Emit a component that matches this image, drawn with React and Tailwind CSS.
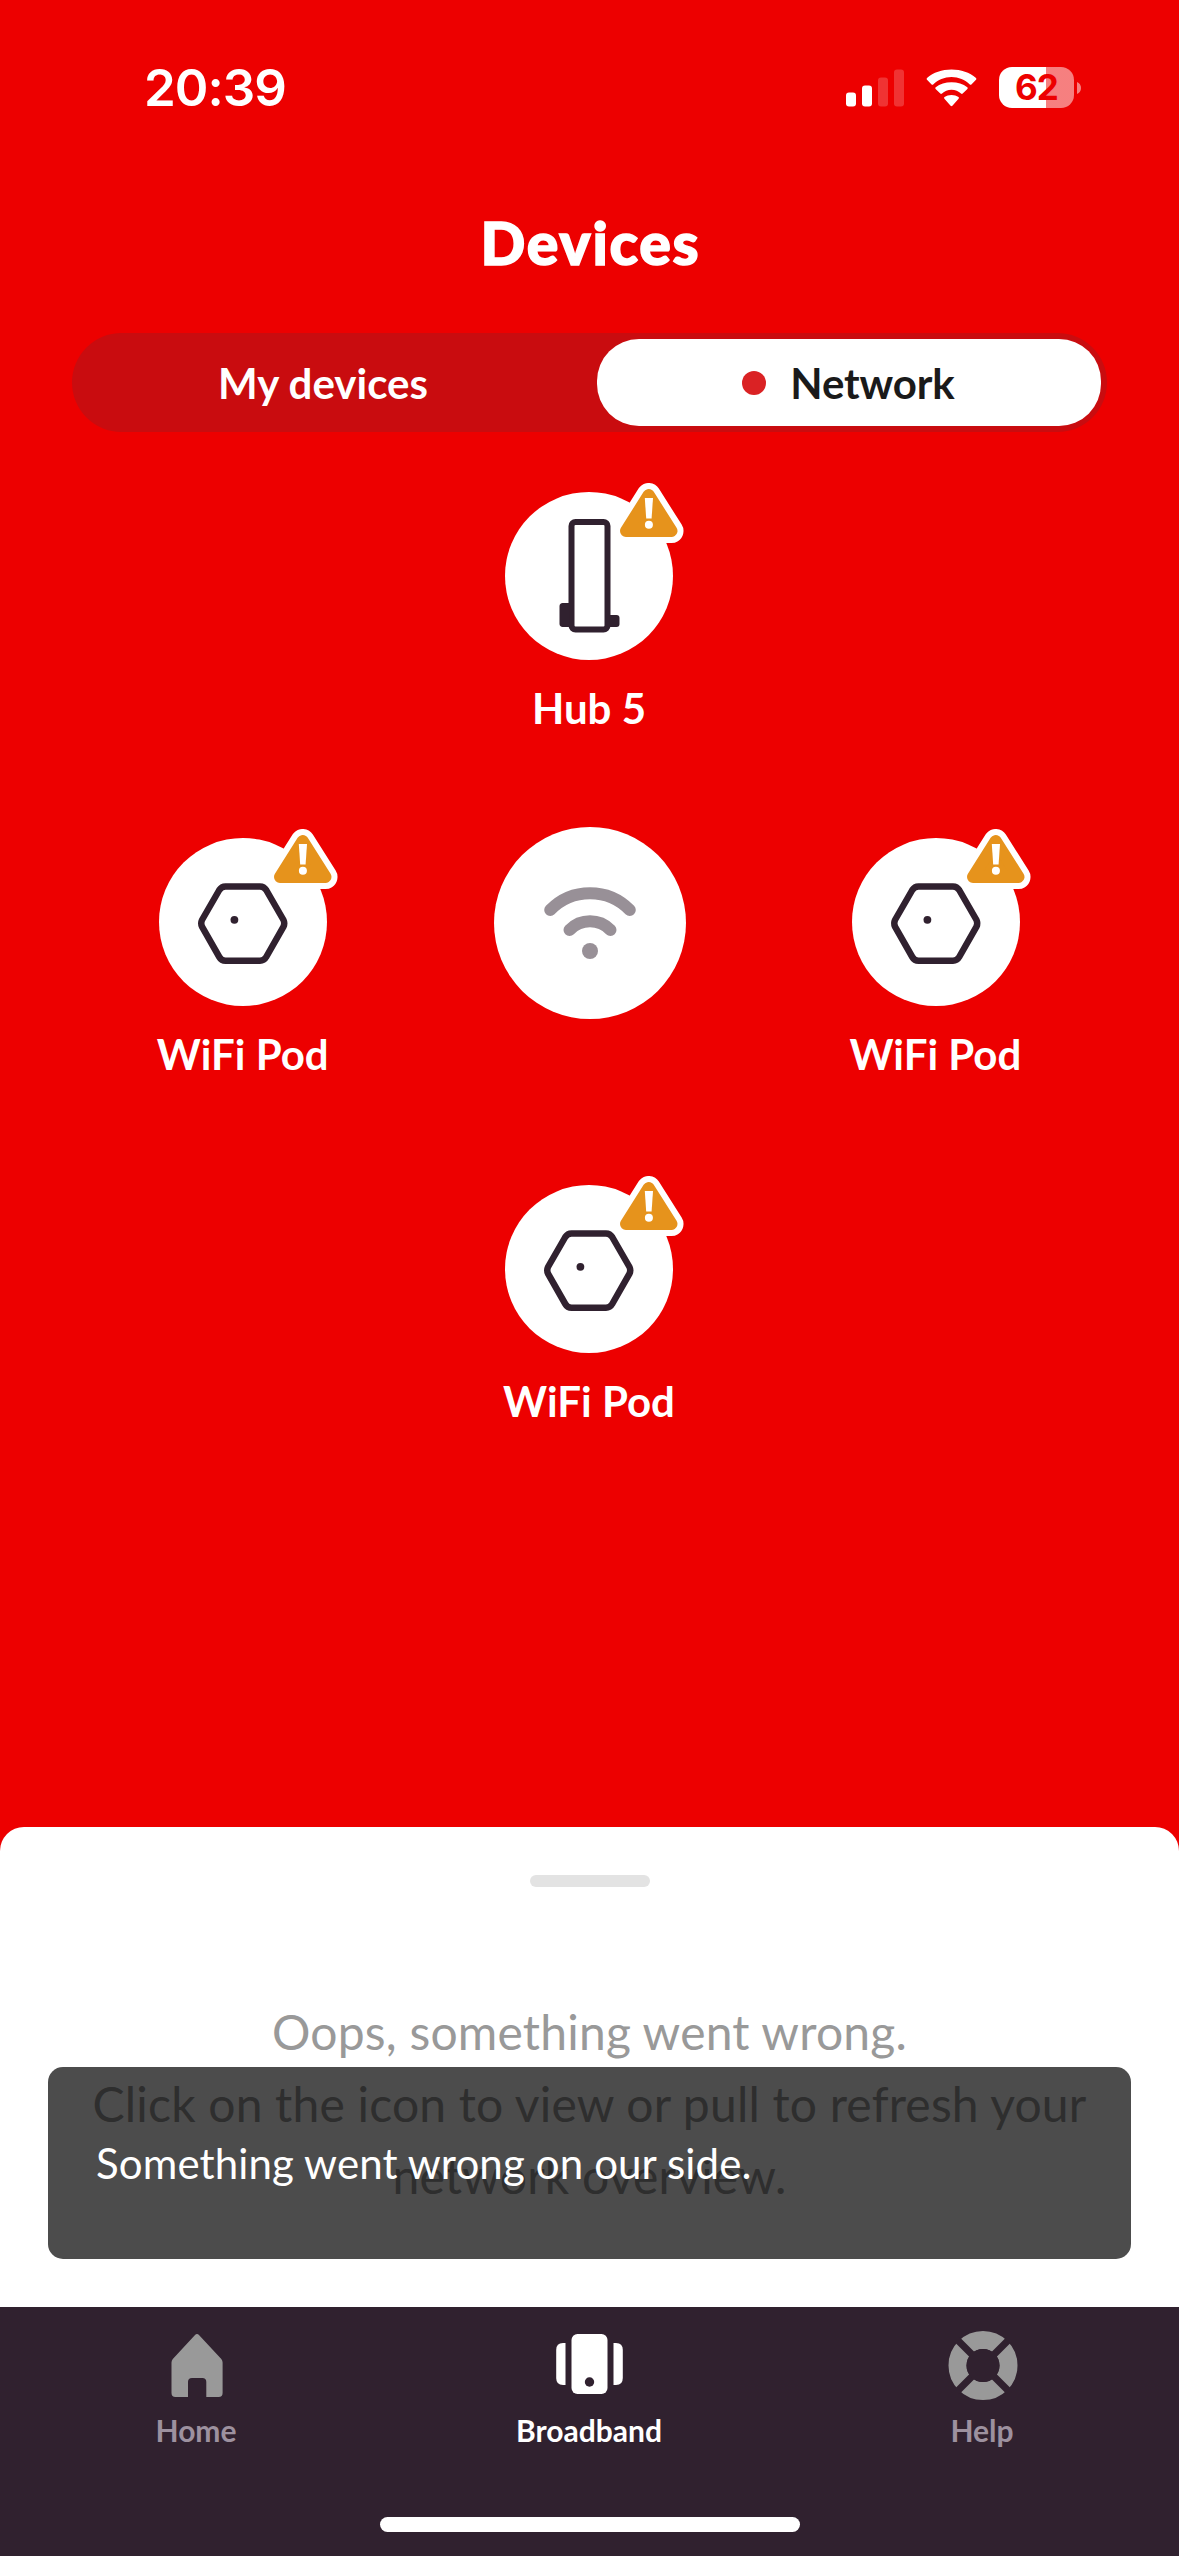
import React, { useState } from 'react';

const pods = {
  left: { name: 'WiFi Pod', type: 'pod' },
  right: { name: 'WiFi Pod', type: 'pod' },
  bottom: { name: 'WiFi Pod', type: 'pod' },
};

function StatusBar() {
  return (
    <div className="flex h-[176px] shrink-0 items-start justify-between pl-[144px] pr-[98px] pt-[57px] text-white">
      <span className="font-['Inter',sans-serif] text-[51px] font-semibold leading-[62px] tracking-[-1px]">20:39</span>

      <div className="flex items-center pt-[10px]">
        <svg className="mr-[22px] mt-[1px]" width="58" height="38" viewBox="0 0 58 38" fill="currentColor">
          <rect x="0" y="23.5" width="10" height="14" rx="3" />
          <rect x="16" y="16.5" width="10" height="21" rx="3" />
          <rect x="32" y="8.5" width="10" height="29" rx="3" opacity="0.2" />
          <rect x="48" y="0.5" width="10" height="37" rx="3" opacity="0.2" />
        </svg>
        <svg className="mr-[22px] mt-[1px]" width="51" height="38" viewBox="0 0 51 38" fill="currentColor">
          <path d="M25.5 8C32.6 8 39 10.8 43.8 15.4Q44.6 16.2 45.4 15.4L50 10.8Q50.9 9.9 50 9C43.6 3.4 35 0.5 25.5 0.5S7.4 3.4 1 9Q.1 9.9 1 10.8L5.6 15.4Q6.4 16.2 7.2 15.4C12 10.8 18.4 8 25.5 8Z" />
          <path d="M25.5 20.8C29.2 20.8 32.5 22.2 35 24.5Q35.9 25.3 36.7 24.5L41.4 19.9Q42.2 19 41.3 18.2C37.1 14.9 31.6 13.2 25.5 13.2S13.9 14.9 9.7 18.2Q8.8 19 9.6 19.9L14.3 24.5Q15.1 25.3 16 24.5C18.5 22.2 21.8 20.8 25.5 20.8Z" />
          <path d="M32.5 28Q33.4 28.8 32.6 29.7L26.4 36.7Q25.5 37.6 24.6 36.7L18.4 29.7Q17.6 28.8 18.5 28C20.4 26.6 22.8 25.9 25.5 25.9S30.6 26.6 32.5 28Z" />
        </svg>
        <div className="flex items-center gap-[3px]">
          <div className="flex h-[41px] w-[75px] items-center justify-center rounded-[13px] bg-linear-to-r from-white from-[62.5%] to-white/50 to-[62.5%]">
            <span className="font-['Inter',sans-serif] text-[35px] font-bold leading-none tracking-[-1px] text-[#ed0000]">62</span>
          </div>
          <svg width="4" height="12" viewBox="0 0 4 12" fill="currentColor" opacity="0.5">
            <path d="M0 0C2.5 1 4 3.3 4 6S2.5 11 0 12Z" />
          </svg>
        </div>
      </div>
    </div>
  );
}

function WarningBadge() {
  return (
    <svg className="absolute -top-[9px] left-[109px]" width="70" height="60" viewBox="0 0 70 60">
      <path d="M34.7 12L57.5 48H12Z" fill="#fff" stroke="#fff" strokeWidth="24" strokeLinejoin="round" />
      <path d="M34.7 12L57.5 48H12Z" fill="#e6931c" stroke="#e6931c" strokeWidth="12" strokeLinejoin="round" />
      <path d="M30.8 15H39L37.6 35.5H32.2Z" fill="#fff" />
      <circle cx="34.9" cy="41.7" r="4" fill="#fff" />
    </svg>
  );
}

function HubIcon() {
  return (
    <svg width="168" height="168" viewBox="0 0 168 168" fill="#30212f">
      <rect x="66.5" y="30" width="36" height="107.5" rx="4" fill="none" stroke="#30212f" strokeWidth="6" />
      <path d="M64.5 111V135H58A3 3 0 0 1 54.5 132V114A3 3 0 0 1 58 111Z" />
      <path d="M104.5 123H111.5A3 3 0 0 1 114.5 126V132A3 3 0 0 1 111.5 135H104.5Z" />
    </svg>
  );
}

function PodIcon() {
  return (
    <svg width="168" height="168" viewBox="0 0 168 168">
      <path
        d="M66.5 48.4H101Q105 48.4 107.2 52L124.5 82Q126 85.3 124.5 88.6L107.2 119Q105 122.8 101 122.8H66.5Q62.5 122.8 60.3 119L43 88.6Q41.5 85.3 43 82L60.3 52Q62.5 48.4 66.5 48.4Z"
        fill="none"
        stroke="#30212f"
        strokeWidth="6.5"
        strokeLinejoin="round"
      />
      <circle cx="75.4" cy="81.8" r="3.9" fill="#30212f" />
    </svg>
  );
}

function DeviceNode({ device }) {
  return (
    <button className="flex flex-col items-center gap-6">
      <div className="relative h-[168px] w-[168px] rounded-full bg-white">
        {device.type === 'hub' ? <HubIcon /> : <PodIcon />}
        <WarningBadge />
      </div>
      <span className="pr-px text-[42px] font-bold leading-[48px] text-white">{device.name}</span>
    </button>
  );
}

function WifiCenter() {
  return (
    <div className="-mt-[11px] ml-px flex h-[192px] w-[192px] items-center justify-center rounded-full bg-white">
      <svg width="192" height="192" viewBox="0 0 192 192" fill="none" stroke="#989097" strokeWidth="12" strokeLinecap="round">
        <path d="M56.2 83A55.6 55.6 0 0 1 135.8 83" />
        <path d="M75.5 103A28.6 28.6 0 0 1 116.5 103" />
        <circle cx="96" cy="124" r="8" fill="#989097" stroke="none" />
      </svg>
    </div>
  );
}

function HomeIcon() {
  return (
    <svg width="72" height="72" viewBox="0 0 72 72" fill="#999">
      <path d="M33.8 5.2Q36 2.8 38.2 5.2L60.3 29Q61.6 30.5 61.6 32.5V63Q61.6 67 57.6 67H45.3V52Q45.3 48 41.3 48H31Q27 48 27 52V67H14.5Q10.5 67 10.5 63V32.5Q10.5 30.5 11.8 29Z" />
    </svg>
  );
}

function BroadbandIcon() {
  return (
    <svg width="72" height="72" viewBox="0 0 72 72" fill="#fff">
      <rect x="17.5" y="4" width="36" height="60" rx="6" />
      <path d="M11.5 13V55H9Q2.2 55 2.2 48V20Q2.2 13 9 13Z" />
      <path d="M59.5 13V55H62Q68.8 55 68.8 48V20Q68.8 13 62 13Z" />
      <circle cx="35.5" cy="52" r="4.7" fill="#30212f" />
    </svg>
  );
}

function HelpIcon() {
  return (
    <svg width="72" height="72" viewBox="0 0 72 72">
      <circle cx="36" cy="35.5" r="25.5" fill="none" stroke="#999" strokeWidth="18" />
      <path d="M10 9.5L62 61.5M62 9.5L10 61.5" stroke="#30212f" strokeWidth="7" />
      <circle cx="36" cy="35.5" r="16.5" fill="#30212f" />
    </svg>
  );
}

const navItems = [
  { id: 'home', label: 'Home', icon: HomeIcon },
  { id: 'broadband', label: 'Broadband', icon: BroadbandIcon },
  { id: 'help', label: 'Help', icon: HelpIcon },
];

export default function App() {
  const [activeNav, setActiveNav] = useState('broadband');

  return (
    <div className="flex h-[2556px] w-[1179px] flex-col overflow-hidden bg-[#ed0000] font-['Lato',sans-serif]">
      <StatusBar />

      <header className="h-[157px] shrink-0 pt-[31px] text-center">
        <h1 className="pl-[2px] text-[59px] font-black leading-[72px] tracking-[1.7px] text-white [-webkit-text-stroke:1.5px_white]">
          Devices
        </h1>
      </header>

      {/* Tabs */}
      <div className="mx-[72px] flex h-[99px] shrink-0 items-center rounded-full bg-[#c90c0f] p-[6px] text-[42px] font-bold">
        <button className="h-full flex-1 pr-[29px] pt-[2px] text-white">My devices</button>
        <button className="flex h-[87px] w-[504px] items-center justify-center rounded-[42px] bg-white pr-px text-[#1a1a1a]">
          <span className="mr-6 h-6 w-6 rounded-full bg-[#da2224]" />
          <span className="pt-[2px] tracking-[-0.1px]">Network</span>
        </button>
      </div>

      {/* Network map */}
      <main className="mt-[60px] grid shrink-0 grid-cols-3 grid-rows-[346px_347px_346px] items-start justify-items-center px-[70px]">
        <div className="col-start-2">
          <DeviceNode device={{ name: 'Hub 5', type: 'hub' }} />
        </div>
        <div className="col-start-1 row-start-2">
          <DeviceNode device={pods.left} />
        </div>
        <div className="col-start-2 row-start-2">
          <WifiCenter />
        </div>
        <div className="col-start-3 row-start-2">
          <DeviceNode device={pods.right} />
        </div>
        <div className="col-start-2 row-start-3">
          <DeviceNode device={pods.bottom} />
        </div>
      </main>

      {/* Bottom sheet */}
      <section className="relative mt-auto flex h-[480px] shrink-0 flex-col items-center rounded-t-[24px] bg-white pt-12">
        <div className="h-3 w-[120px] rounded-full bg-[#e3e3e3]" />
        <p className="mt-[109px] text-center text-[48px] leading-[72px] tracking-[0.2px] text-[#999]">
          Oops, something went wrong.
          <br />
          Click on the icon to view or pull to refresh your
          <br />
          network overview.
        </p>

        {/* Toast */}
        <div className="absolute inset-x-12 bottom-12 flex h-[192px] items-center rounded-[15px] bg-black/70 px-12 text-[42px] leading-[50px] tracking-[0.13px] text-white">
          Something went wrong on our side.
        </div>
      </section>

      <nav className="flex h-[249px] shrink-0 flex-col items-center bg-[#30212f]">
        <div className="flex w-full pt-[23px]">
          {navItems.map(({ id, label, icon: Icon }) => (
            <button
              key={id}
              onClick={() => setActiveNav(id)}
              className={`flex flex-1 flex-col items-center gap-[10px] text-[30px] font-bold leading-[36px] ${
                activeNav === id ? 'text-white' : 'text-[#9d919f]'
              }`}
            >
              <Icon />
              <span className="pr-px">{label}</span>
            </button>
          ))}
        </div>
        <div className="mb-6 mt-auto h-[15px] w-[420px] rounded-full bg-white" />
      </nav>
    </div>
  );
}
